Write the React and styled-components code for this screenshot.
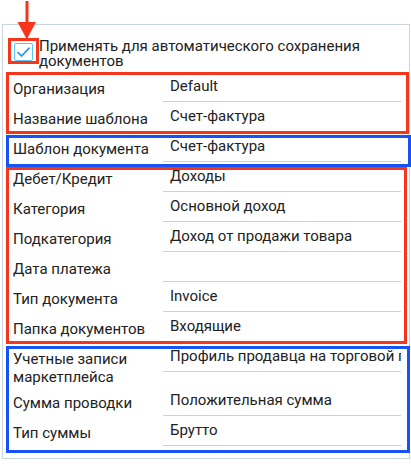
import React from 'react'
import styled, { createGlobalStyle } from 'styled-components'

const GlobalStyle = createGlobalStyle`
  html, body {
    margin: 0;
    padding: 0;
    background: #ffffff;
  }
  body {
    font-family: Roboto, "Liberation Sans", Arial, sans-serif;
    color: #222222;
  }
`

const RED = '#f5361c'
const BLUE = '#1553f6'

const Page = styled.div`
  position: relative;
  width: 411px;
  height: 464px;
  padding: 24px 0 0 2px;
  box-sizing: border-box;
`

const Panel = styled.div`
  width: 408px;
  box-sizing: border-box;
  border: 1px solid #c7d6de;
  padding: 0 0 12px 0;
`

const CheckRow = styled.label`
  display: flex;
  align-items: flex-start;
  padding: 14px 0 0 11px;
  margin-bottom: 3px;
  font-size: 15px;
  line-height: 15px;
`

const Marker = styled.span`
  position: relative;
  flex: none;
  margin-top: 4px;
  &::after {
    content: '';
    position: absolute;
    top: -5px;
    left: -6px;
    right: -6px;
    bottom: -3px;
    border: 3px solid ${RED};
    pointer-events: none;
  }
`

const Box = styled.span`
  display: flex;
  align-items: center;
  justify-content: center;
  width: 19px;
  height: 18px;
  box-sizing: border-box;
  border: 1px solid #5cc6f2;
  border-radius: 2px;
  background: #ffffff;
`

const CheckText = styled.span`
  margin-left: 6px;
`

const Group = styled.div`
  position: relative;
  &::after {
    content: '';
    position: absolute;
    top: ${p => p.$top}px;
    bottom: ${p => p.$bottom}px;
    left: 3px;
    right: ${p => p.$right}px;
    border: 3px solid ${p => p.$color};
    pointer-events: none;
  }
`

const Row = styled.div`
  display: grid;
  grid-template-columns: 150px 1fr;
  align-items: start;
  padding: 0 8px 0 10px;
  font-size: 15px;
`

const Label = styled.div`
  padding-top: 8px;
  line-height: 18px;
  padding-right: 12px;
`

const Value = styled.div`
  height: 30px;
  box-sizing: border-box;
  padding: 5px 0 0 7px;
  line-height: 18px;
  border-bottom: 1px solid #c5d3da;
  white-space: nowrap;
  overflow: hidden;
`

const Arrow = styled.svg`
  position: absolute;
  left: 16px;
  top: 0;
`

const groups = [
  {
    color: RED, top: 0, bottom: -2, right: 0,
    rows: [
      ['Организация', 'Default'],
      ['Название шаблона', 'Счет-фактура'],
    ],
  },
  {
    color: BLUE, top: 3, bottom: -5, right: -2,
    rows: [['Шаблон документа', 'Счет-фактура']],
  },
  {
    color: RED, top: 5, bottom: -2, right: 2,
    rows: [
      ['Дебет/Кредит', 'Доходы'],
      ['Категория', 'Основной доход'],
      ['Подкатегория', 'Доход от продажи товара'],
      ['Дата платежа', ''],
      ['Тип документа', 'Invoice'],
      ['Папка документов', 'Входящие'],
    ],
  },
  {
    color: BLUE, top: 4, bottom: -7, right: -1,
    rows: [
      ['Учетные записи маркетплейса', 'Профиль продавца на торговой площадке'],
      ['Сумма проводки', 'Положительная сумма'],
      ['Тип суммы', 'Брутто'],
    ],
  },
]

export default function App() {
  return (
    <Page>
      <GlobalStyle />
      <Panel>
        <CheckRow>
          <Marker>
            <Box>
              <svg width="15" height="12" viewBox="0 0 15 12">
                <path d="M1.5 6.2 L5.6 10 L13.6 1.6" fill="none" stroke="#2a9de6" strokeWidth="1.8" />
              </svg>
            </Box>
          </Marker>
          <CheckText>Применять для автоматического сохранения документов</CheckText>
        </CheckRow>
        {groups.map((g, i) => (
          <Group key={i} $color={g.color} $top={g.top} $bottom={g.bottom} $right={g.right}>
            {g.rows.map(([label, value]) => (
              <Row key={label}>
                <Label>{label}</Label>
                <Value>{value}</Value>
              </Row>
            ))}
          </Group>
        ))}
      </Panel>
      <Arrow width="22" height="42" viewBox="0 0 22 42">
        <rect x="9.5" y="1" width="3" height="24" fill={RED} />
        <path d="M1.5 22 L20 22 L10.8 39.5 Z" fill={RED} />
      </Arrow>
    </Page>
  )
}
